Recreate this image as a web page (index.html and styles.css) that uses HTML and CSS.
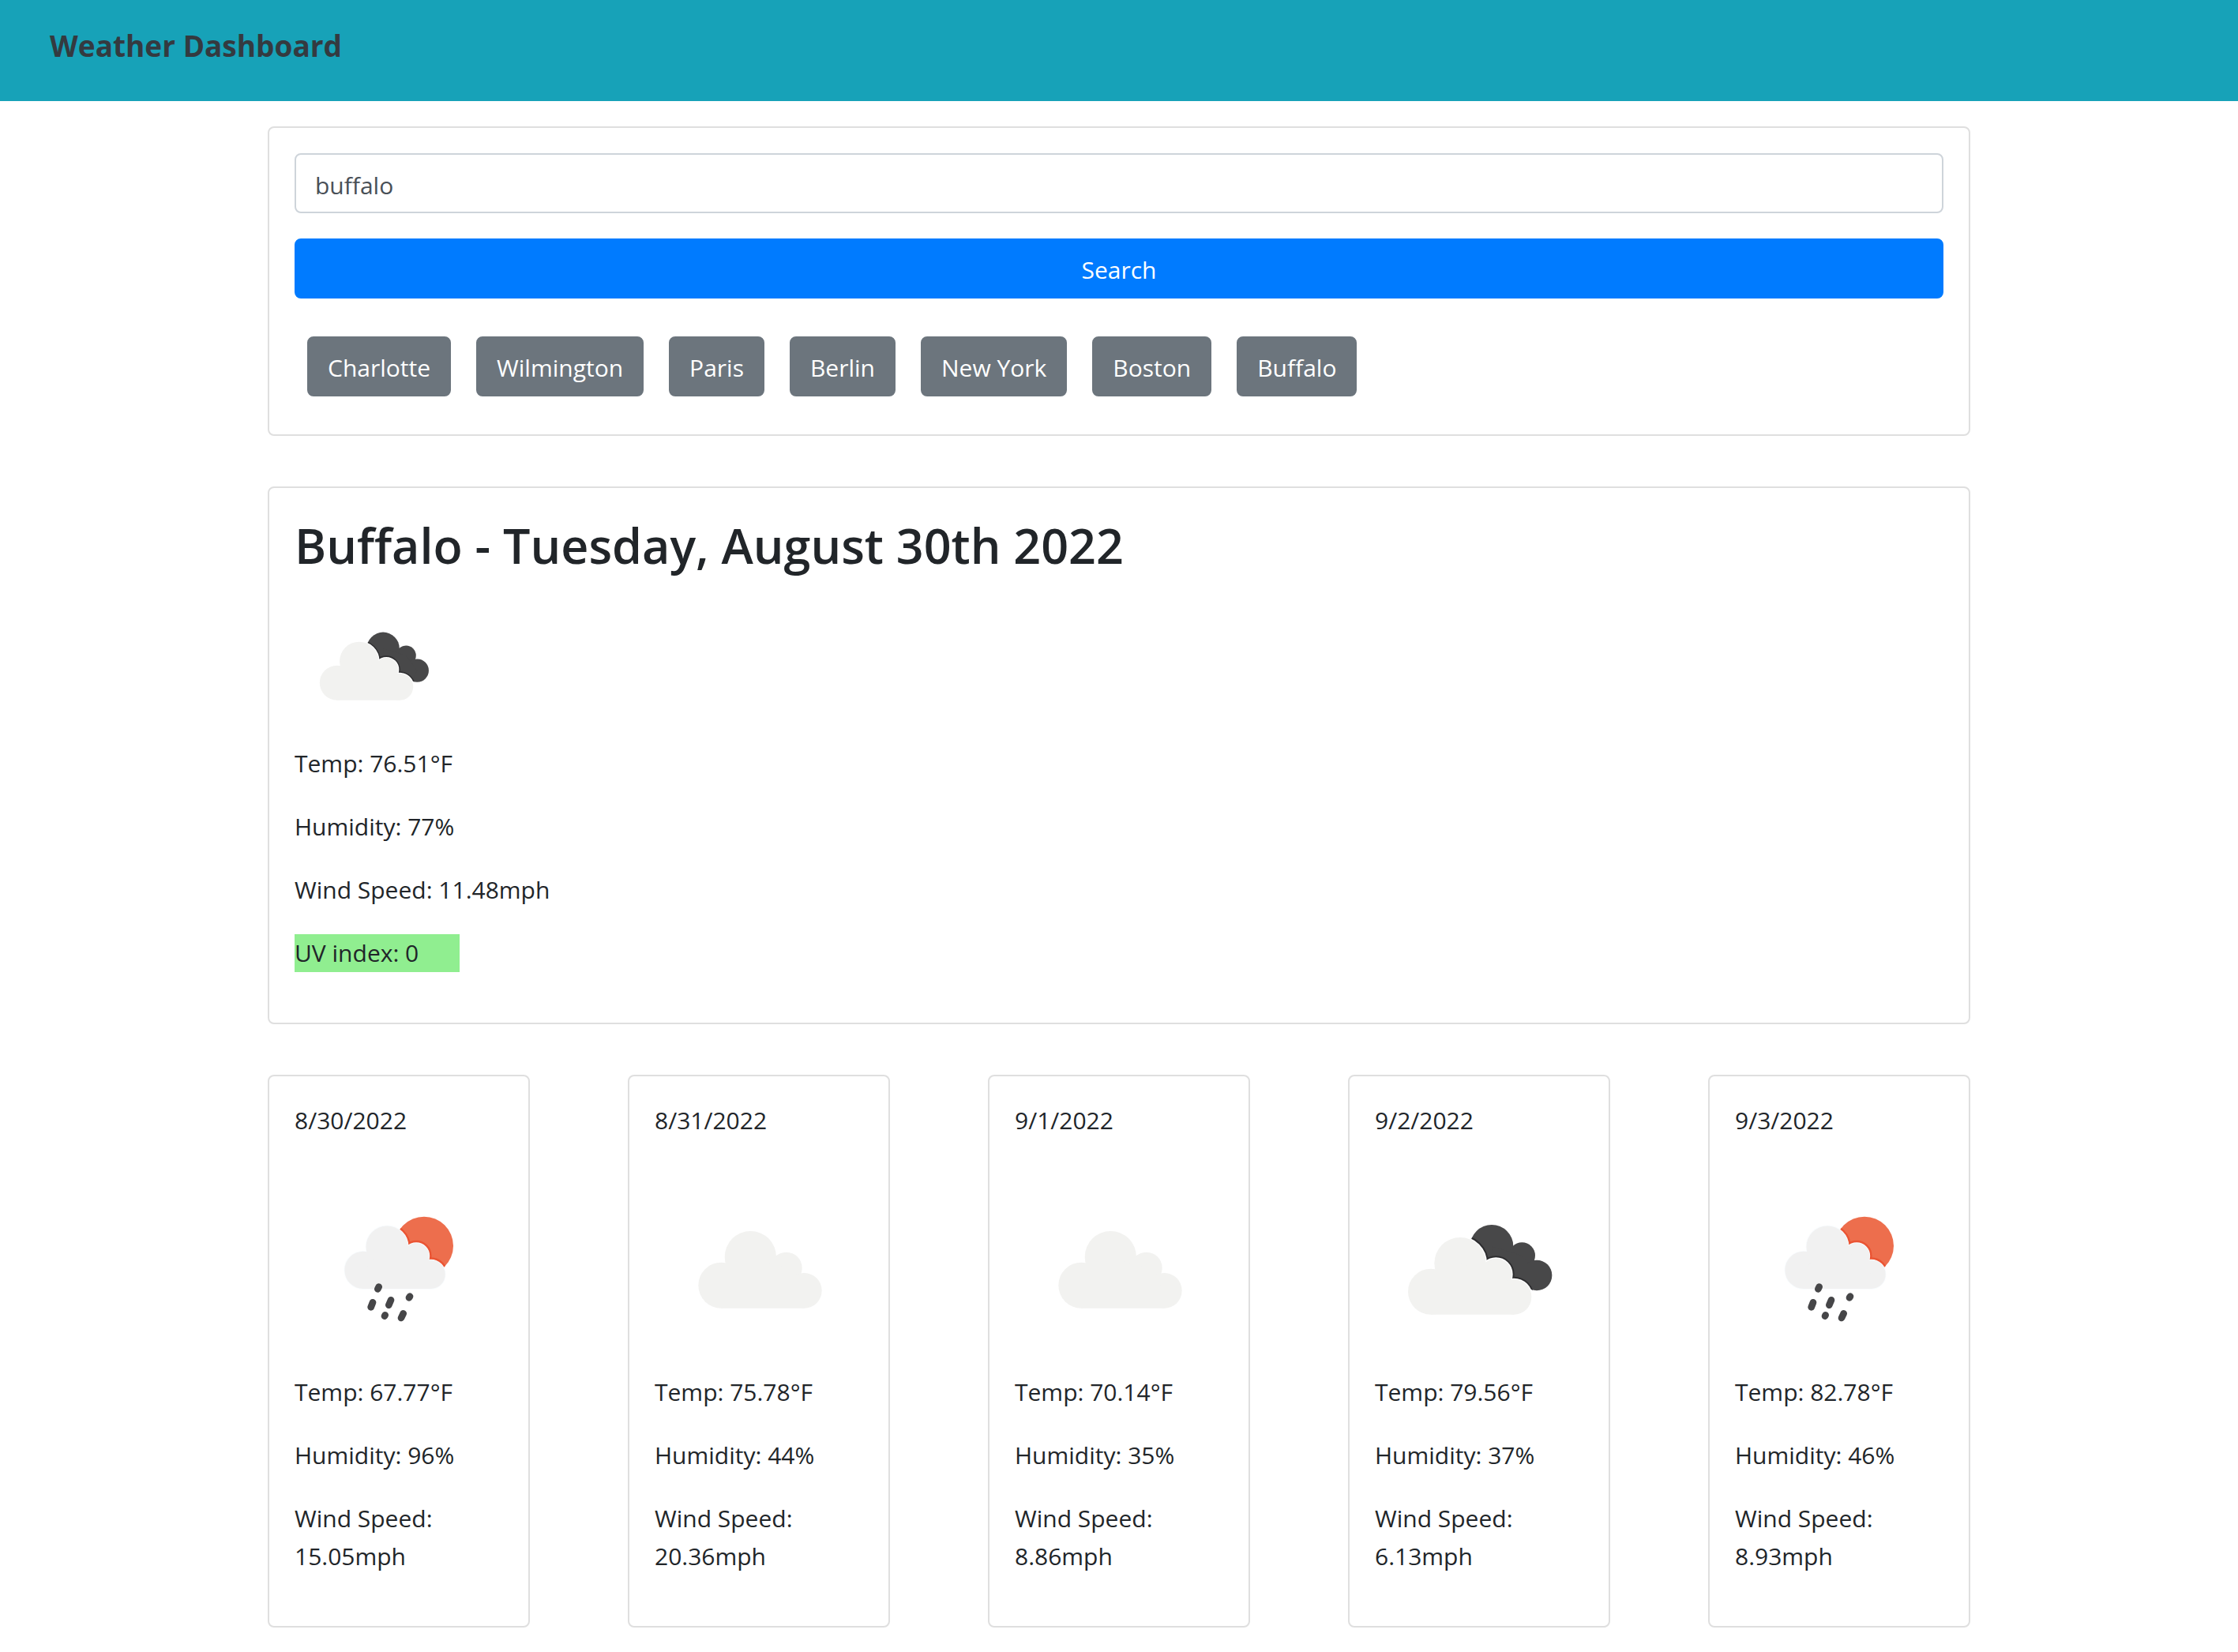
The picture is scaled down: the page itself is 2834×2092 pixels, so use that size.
FILE: index.html
```
<!DOCTYPE html>
<html lang="en">
<head>
<meta charset="utf-8">
<meta name="viewport" content="width=device-width, initial-scale=1">
<title>Weather Dashboard</title>
<link rel="stylesheet" href="styles.css">
</head>
<body>
<svg class="sprite" aria-hidden="true">
  <defs>
    <g id="cloud-shape">
      <circle cx="87" cy="-87" r="87"/>
      <circle cx="198" cy="-195" r="98"/>
      <circle cx="334" cy="-153" r="60"/>
      <circle cx="402" cy="-67" r="67"/>
      <path d="M87 0V-87L198 -195L334 -153L402 -67V0Z"/>
    </g>
    <g id="back-cloud-shape">
      <circle cx="444" cy="310" r="82"/>
      <circle cx="559" cy="345" r="50"/>
      <circle cx="615" cy="420" r="58"/>
      <path d="M444 310L559 345L615 420L590 470L450 450Z"/>
    </g>
    <clipPath id="back-cloud-clip">
      <circle cx="444" cy="310" r="82"/>
      <circle cx="559" cy="345" r="50"/>
      <circle cx="615" cy="420" r="58"/>
      <path d="M444 310L559 345L615 420L590 470L450 450Z"/>
    </clipPath>
    <clipPath id="sun-clip"><circle cx="492" cy="308" r="111"/></clipPath>
  </defs>
  <symbol id="icon-cloud" viewBox="0 0 792 792">
    <use href="#cloud-shape" transform="translate(166 545)" fill="#f2f2f0"/>
  </symbol>
  <symbol id="icon-broken-clouds" viewBox="0 0 792 792">
    <use href="#back-cloud-shape" fill="#484849"/>
    <g clip-path="url(#back-cloud-clip)">
      <use href="#cloud-shape" transform="translate(126 569)" stroke="#2d2d2f" stroke-width="20"/>
    </g>
    <use href="#cloud-shape" transform="translate(126 569)" fill="#fff" stroke="#fff" stroke-width="8"/>
    <use href="#cloud-shape" transform="translate(126 569)" fill="#f2f2f0"/>
  </symbol>
  <symbol id="icon-rain" viewBox="0 0 792 792">
    <circle cx="492" cy="308" r="111" fill="#ed6e4d"/>
    <g clip-path="url(#sun-clip)">
      <use href="#cloud-shape" transform="translate(190 471) scale(.815)" stroke="#ea5433" stroke-width="24"/>
    </g>
    <use href="#cloud-shape" transform="translate(190 471) scale(.815)" fill="#f1f7fb" stroke="#f9fcfe" stroke-width="6"/>
    <use href="#cloud-shape" transform="translate(190 471) scale(.815)" fill="#f1f1f1"/>
    <path d="M320 464L316 472M297 523L290 541M366 514L358 533M438 500L435 505M344 571L342 575M413 565L405 582" fill="none" stroke="#464648" stroke-width="26" stroke-linecap="round"/>
  </symbol>
</svg>

<header class="navbar">
  <h1 class="brand">Weather Dashboard</h1>
</header>

<main class="container">
  <section class="card">
    <form class="search">
      <input class="search-input" type="text" value="buffalo" aria-label="City">
      <button class="btn btn-primary" type="button">Search</button>
    </form>
    <div class="history">
      <button class="btn btn-secondary" type="button">Charlotte</button>
      <button class="btn btn-secondary" type="button">Wilmington</button>
      <button class="btn btn-secondary" type="button">Paris</button>
      <button class="btn btn-secondary" type="button">Berlin</button>
      <button class="btn btn-secondary" type="button">New York</button>
      <button class="btn btn-secondary" type="button">Boston</button>
      <button class="btn btn-secondary" type="button">Buffalo</button>
    </div>
  </section>

  <section class="card">
    <h2 class="city">Buffalo - Tuesday, August 30th 2022</h2>
    <svg class="icon icon-now" role="img" aria-label="Broken clouds"><use href="#icon-broken-clouds"/></svg>
    <p>Temp: 76.51°F</p>
    <p>Humidity: 77%</p>
    <p>Wind Speed: 11.48mph</p>
    <p class="uv">UV index: 0</p>
  </section>

  <section class="forecast">
    <article class="card day">
      <p>8/30/2022</p>
      <svg class="icon" viewBox="0 0 792 792" role="img" aria-label="Rain"><use href="#icon-rain"/></svg>
      <p>Temp: 67.77°F</p>
      <p>Humidity: 96%</p>
      <p>Wind Speed: 15.05mph</p>
    </article>
    <article class="card day">
      <p>8/31/2022</p>
      <svg class="icon" viewBox="0 0 792 792" role="img" aria-label="Scattered clouds"><use href="#icon-cloud"/></svg>
      <p>Temp: 75.78°F</p>
      <p>Humidity: 44%</p>
      <p>Wind Speed: 20.36mph</p>
    </article>
    <article class="card day">
      <p>9/1/2022</p>
      <svg class="icon" viewBox="0 0 792 792" role="img" aria-label="Scattered clouds"><use href="#icon-cloud"/></svg>
      <p>Temp: 70.14°F</p>
      <p>Humidity: 35%</p>
      <p>Wind Speed: 8.86mph</p>
    </article>
    <article class="card day">
      <p>9/2/2022</p>
      <svg class="icon" viewBox="0 0 792 792" role="img" aria-label="Broken clouds"><use href="#icon-broken-clouds"/></svg>
      <p>Temp: 79.56°F</p>
      <p>Humidity: 37%</p>
      <p>Wind Speed: 6.13mph</p>
    </article>
    <article class="card day">
      <p>9/3/2022</p>
      <svg class="icon" viewBox="0 0 792 792" role="img" aria-label="Rain"><use href="#icon-rain"/></svg>
      <p>Temp: 82.78°F</p>
      <p>Humidity: 46%</p>
      <p>Wind Speed: 8.93mph</p>
    </article>
  </section>
</main>
</body>
</html>
```
FILE: styles.css
```
* {
  box-sizing: border-box;
}

body {
  margin: 0;
  background: #fff;
  color: #212529;
  font-family: "Segoe UI", "Open Sans", "Noto Sans", sans-serif;
  font-size: 30px;
  line-height: 48px;
}

p {
  margin: 0 0 32px;
}

.sprite {
  position: absolute;
  width: 0;
  height: 0;
}

.navbar {
  padding: 34px 63px 46px;
  background: #17a2b8;
}

.brand {
  margin: 0;
  color: #343a40;
  font-size: 37px;
  font-weight: 700;
  line-height: 48px;
}

.container {
  display: flex;
  flex-direction: column;
  gap: 64px;
  max-width: 2156px;
  margin: 32px auto;
}

.card {
  padding: 32px;
  border: 2px solid #dfdfdf;
  border-radius: 8px;
}

.search {
  display: flex;
  flex-direction: column;
  gap: 32px;
}

.search-input {
  width: 100%;
  height: 76px;
  padding: 14px 24px 10px;
  border: 2px solid #ced4da;
  border-radius: 8px;
  background: #fff;
  color: #495057;
  font: inherit;
}

.btn {
  height: 76px;
  padding: 14px 24px 10px;
  border: 2px solid transparent;
  border-radius: 8px;
  color: #fff;
  font: inherit;
  cursor: pointer;
}

.btn-primary {
  border-color: #007bff;
  background: #007bff;
}

.btn-secondary {
  border-color: #6c757d;
  background: #6c757d;
}

.history {
  display: flex;
  flex-wrap: wrap;
  gap: 32px;
  padding: 48px 16px 16px;
}

.city {
  margin: 0 0 12px;
  font-size: 61px;
  font-weight: 600;
  line-height: 81px;
}

.icon {
  display: block;
  width: 100%;
}

.icon-now {
  width: 200px;
  height: 200px;
}

.uv {
  width: 10%;
  background: #90ee90;
}

.forecast {
  display: flex;
  flex-wrap: wrap;
  justify-content: space-between;
}

.day {
  flex: 0 0 332px;
}
```
